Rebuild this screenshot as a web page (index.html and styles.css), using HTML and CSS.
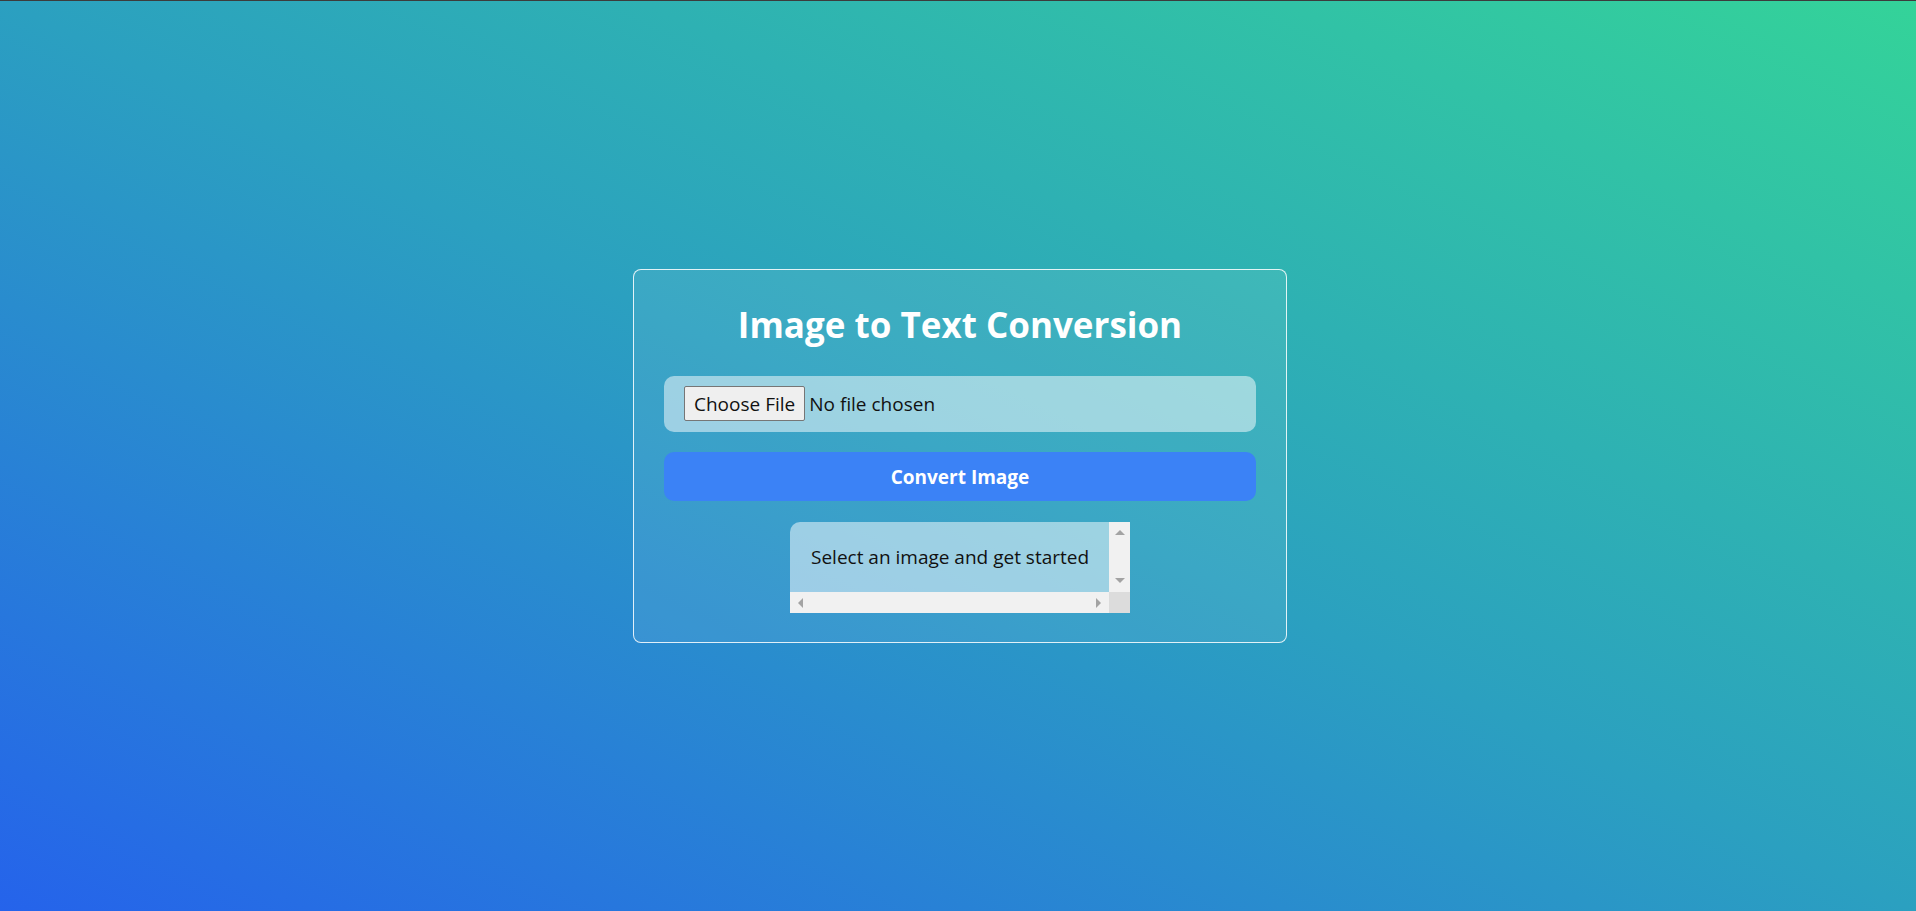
FILE: index.html
```html
<!DOCTYPE html>
<html lang="en">
<head>
<meta charset="utf-8">
<title>Image to Text Conversion</title>
<link rel="stylesheet" href="styles.css">
</head>
<body>
  <main class="page">
    <section class="card">
      <h1 class="title">Image to Text Conversion</h1>
      <div class="upload">
        <input class="file-input" type="file" accept="image/*">
      </div>
      <button class="convert" type="button">Convert Image</button>
      <div class="output">
        <div class="output-text">Select an image and get started</div>
        <div class="vbar">
          <span class="arrow arrow-up"></span>
          <span class="arrow arrow-down"></span>
        </div>
        <div class="hbar">
          <span class="arrow arrow-left"></span>
          <span class="arrow arrow-right"></span>
        </div>
        <div class="corner"></div>
      </div>
    </section>
  </main>
</body>
</html>
```

FILE: styles.css
```css
* { box-sizing: border-box; }

html, body {
  margin: 0;
  height: 100%;
}

body {
  font-family: "Open Sans", "Noto Sans", sans-serif;
  border-top: 1px solid #3c3c3c;
  background: linear-gradient(to top right, #2563eb 0%, #2ba0c0 50%, #34d399 100%);
  overflow: hidden;
}

.page {
  height: 100%;
  display: flex;
  align-items: center;
  justify-content: center;
  padding-left: 4px;
}

.card {
  width: 654px;
  padding: 31px 30px 29px;
  border: 1px solid rgba(255, 255, 255, 0.85);
  border-radius: 8px;
  background: rgba(255, 255, 255, 0.08);
  display: flex;
  flex-direction: column;
  align-items: stretch;
}

.title {
  margin: 0 0 27px;
  color: #fff;
  font-size: 35px;
  font-weight: 700;
  line-height: 48px;
  text-align: center;
}

.upload {
  height: 56px;
  padding: 10px 20px 11px;
  border-radius: 10px;
  background: rgba(255, 255, 255, 0.5);
  display: flex;
  align-items: center;
}

.file-input {
  font-family: "Open Sans", "Noto Sans", sans-serif;
  font-size: 19px;
  color: #111;
}

.file-input::file-selector-button {
  font-family: inherit;
  font-size: 19px;
  height: 35px;
  padding: 0 9px;
  margin-right: 4px;
  color: #111;
  background: #efefef;
  border: 1px solid #767676;
  border-radius: 2px;
}

.convert {
  margin-top: 20px;
  height: 49px;
  border: 0;
  border-radius: 10px;
  background: #3b82f6;
  color: #fff;
  font-family: "Open Sans", "Noto Sans", sans-serif;
  font-size: 19px;
  font-weight: 700;
}

.output {
  margin: 21px auto 0;
  width: 340px;
  height: 91px;
  display: grid;
  grid-template-columns: 1fr 21px;
  grid-template-rows: 1fr 21px;
  border-top-left-radius: 10px;
  overflow: hidden;
}

.output-text {
  background: rgba(255, 255, 255, 0.5);
  padding: 0 0 0 21px;
  display: flex;
  align-items: center;
  font-size: 19px;
  color: #111;
  white-space: nowrap;
  overflow: hidden;
}

.vbar {
  background: #f1f1f1;
  display: flex;
  flex-direction: column;
  justify-content: space-between;
  align-items: center;
  padding: 8px 0 9px;
}

.hbar {
  background: #f1f1f1;
  display: flex;
  justify-content: space-between;
  align-items: center;
  padding: 0 8px 0 8px;
}

.corner {
  background: #dcdcdc;
}

.arrow {
  width: 0;
  height: 0;
  display: block;
}

.arrow-up {
  border-left: 5px solid transparent;
  border-right: 5px solid transparent;
  border-bottom: 5px solid #a3a3a3;
}

.arrow-down {
  border-left: 5px solid transparent;
  border-right: 5px solid transparent;
  border-top: 5px solid #a3a3a3;
}

.arrow-left {
  border-top: 5px solid transparent;
  border-bottom: 5px solid transparent;
  border-right: 5px solid #a3a3a3;
}

.arrow-right {
  border-top: 5px solid transparent;
  border-bottom: 5px solid transparent;
  border-left: 5px solid #a3a3a3;
}
```
